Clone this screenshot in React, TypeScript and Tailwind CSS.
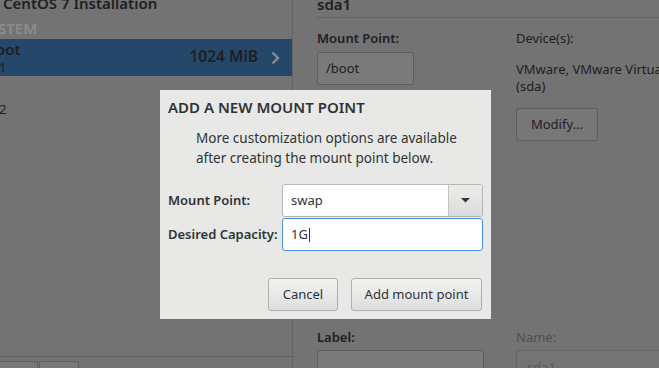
import React from "react";

const font = { fontFamily: '"Noto Sans", "Open Sans", sans-serif' };

function Btn({ children, className = "" }: { children: React.ReactNode; className?: string }) {
  return (
    <button
      className={
        "flex h-[33px] items-center justify-center rounded-[3px] border border-[#b0b0ab] bg-gradient-to-b from-[#f3f3f2] to-[#dedede] text-[13px] text-[#2e3436] " +
        className
      }
    >
      {children}
    </button>
  );
}

export default function App() {
  return (
    <div className="relative h-[368px] w-[659px] overflow-hidden bg-[#737373] text-[#1e2021]" style={font}>
      <div className="flex h-full">
        {/* left: mount point list */}
        <div className="flex w-[293px] shrink-0 flex-col border-r border-[#636363]">
          <div className="-mt-[9px] h-[24px] pl-[3px] text-[15px] font-semibold leading-[24px] text-[#1e2021]">
            CentOS 7 Installation
          </div>
          <div className="mt-[4px] -ml-[2px] text-[15px] font-semibold leading-[18px] text-[#8c8c8c]">STEM</div>
          <div className="mt-[2px] flex h-[37px] items-center justify-between bg-[#24476a] pr-[12px]">
            <div className="leading-none">
              <div className="-ml-[4px] text-[15px] font-semibold">oot</div>
              <div className="mt-[4px] -ml-[1px] text-[13px]">1</div>
            </div>
            <div className="flex items-center gap-[13px]">
              <span className="-mt-[1px] text-[15.5px] font-semibold">1024 MiB</span>
              <svg width="9" height="14" viewBox="0 0 9 14">
                <path d="M1.5 1.5 L7 7 L1.5 12.5" fill="none" stroke="#8a8d90" strokeWidth="2.4" />
              </svg>
            </div>
          </div>
          <div className="mt-[27px] -ml-[1px] text-[13px] leading-[12px]">2</div>
          <div className="flex-1" />
          <div className="h-[5px] border-t border-[#5f5f5f]" />
          <div className="flex h-[7px] gap-[1px]">
            <div className="w-[38px] rounded-tr-[3px] border border-l-0 border-b-0 border-[#5f5f5f] bg-[#787878]" />
            <div className="w-[40px] rounded-t-[3px] border border-b-0 border-[#5f5f5f] bg-[#787878]" />
          </div>
        </div>

        {/* right: details */}
        <div className="min-w-0 flex-1 overflow-hidden pl-[24px]">
          <div className="-mt-[6px] border-b border-[#656565] pb-[3px] text-[15px] font-semibold leading-[20px]">sda1</div>
          <div className="mt-[12px] flex">
            <div className="w-[199px] shrink-0">
              <div className="text-[13px] font-semibold leading-[16px]">Mount Point:</div>
              <div className="mt-[6px] flex h-[33px] w-[97px] items-center rounded-[3px] border border-[#5d5d5d] bg-[#7a7a7a] pl-[8px] text-[13px]">
                /boot
              </div>
            </div>
            <div className="min-w-0">
              <div className="text-[13px] leading-[16px]">Device(s):</div>
              <div className="mt-[15px] whitespace-nowrap text-[13px] leading-[17px]">VMware, VMware Virtual S</div>
              <div className="text-[13px] leading-[17px]">(sda)</div>
              <div className="mt-[13px] flex h-[33px] w-[82px] items-center justify-center rounded-[3px] border border-[#5d5d5d] bg-[#777777] text-[13px]">
                Modify...
              </div>
            </div>
          </div>
          <div className="mt-[188px] flex">
            <div className="w-[199px] shrink-0">
              <div className="text-[13px] font-semibold leading-[16px]">Label:</div>
              <div className="mt-[5px] h-[33px] w-[167px] rounded-[3px] border border-[#5d5d5d] bg-[#7a7a7a]" />
            </div>
            <div className="flex-1">
              <div className="text-[13px] leading-[16px] text-[#4f4f4f]">Name:</div>
              <div className="mt-[5px] h-[33px] rounded-l-[3px] border border-r-0 border-[#656565] bg-[#747474] pl-[10px] pt-[7px] text-[13px] text-[#5a5a5a]">
                sda1
              </div>
            </div>
          </div>
        </div>
      </div>

      {/* modal dialog */}
      <div className="absolute left-[160px] top-[90px] flex h-[229px] w-[331px] flex-col bg-[#e8e8e7] px-[8px] pt-[8px] text-[#2e3436]">
        <div className="text-[15px] font-semibold leading-[18px]">ADD A NEW MOUNT POINT</div>
        <div className="mt-[12px] pl-[28px] text-[13.5px] leading-[20px]">
          More customization options are available
          <br />
          after creating the mount point below.
        </div>
        <div className="mt-[16px] flex items-center">
          <div className="w-[114px] text-[13px] font-semibold">Mount Point:</div>
          <div className="flex h-[33px] w-[201px] overflow-hidden rounded-[3px] border border-[#b6b6b3] bg-white">
            <div className="flex flex-1 items-center pl-[8px] text-[13px]">swap</div>
            <div className="flex w-[34px] items-center justify-center border-l border-[#c4c4c1] bg-gradient-to-b from-[#ececeb] to-[#dcdcdb]">
              <svg width="9" height="5" viewBox="0 0 9 5">
                <path d="M0 0 H9 L4.5 4.5 Z" fill="#2e3436" />
              </svg>
            </div>
          </div>
        </div>
        <div className="mt-[1px] flex items-center">
          <div className="w-[114px] text-[13px] font-semibold">Desired Capacity:</div>
          <div className="flex h-[33px] w-[201px] items-center rounded-[3px] border border-[#4a90d9] bg-white pl-[8px] text-[13px]">
            1G<span className="ml-[1px] h-[14px] w-[1px] bg-[#2e3436]" />
          </div>
        </div>
        <div className="mt-[27px] flex justify-end gap-[13px] pr-[1px]">
          <Btn className="w-[70px]">Cancel</Btn>
          <Btn className="w-[131px]">Add mount point</Btn>
        </div>
      </div>
    </div>
  );
}
